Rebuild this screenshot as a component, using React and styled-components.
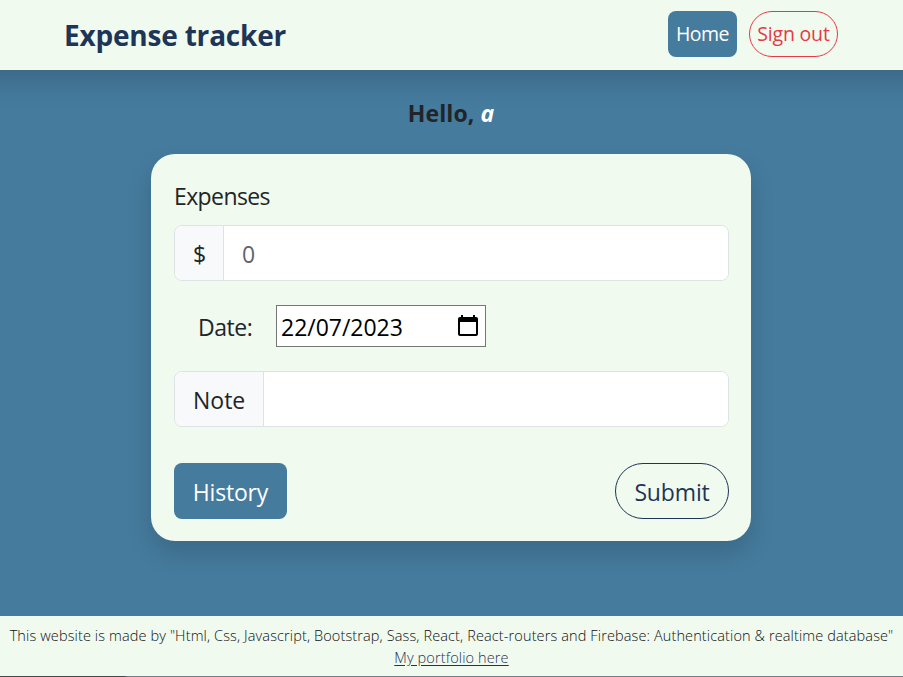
import React from "react";
import styled, { createGlobalStyle, css } from "styled-components";

const colors = {
  cream: "#f1faee",
  blue: "#457b9d",
  navy: "#1d3557",
  red: "#e63946",
  ink: "#212529",
  line: "#dee2e6",
};

const GlobalStyle = createGlobalStyle`
  *, *::before, *::after { box-sizing: border-box; }
  body {
    margin: 0;
    background: ${colors.blue};
    color: ${colors.ink};
    font-family: "Open Sans", "Noto Sans", sans-serif;
    font-size: 23px;
    font-weight: 370;
    line-height: 36px;
    overflow: hidden;
  }
  button, input { font: inherit; letter-spacing: inherit; }
`;

const Page = styled.div`
  display: flex;
  flex-direction: column;
  height: 677px;
`;

const Header = styled.header`
  display: flex;
  align-items: center;
  justify-content: space-between;
  flex: none;
  height: 70px;
  padding: 0 65px 2px 64px;
  background: ${colors.cream};
  box-shadow: 0 -12px 24px 24px rgba(0, 0, 0, 0.15);
`;

const Brand = styled.h1`
  margin: 2px 0 0;
  font-size: 28px;
  font-weight: 700;
  letter-spacing: -0.2px;
  white-space: nowrap;
  color: ${colors.navy};
`;

const Nav = styled.nav`
  display: flex;
  gap: 12px;
`;

const Button = styled.button`
  display: flex;
  align-items: center;
  justify-content: center;
  width: ${(p) => p.$width}px;
  height: ${(p) => (p.$small ? 46 : 56)}px;
  padding: ${(p) => (p.$small ? 0 : 2)}px 0 0;
  font-size: ${(p) => (p.$small ? 19.5 : 23)}px;
  letter-spacing: ${(p) => p.$spacing || 0}px;
  white-space: nowrap;
  ${(p) =>
    p.$outline
      ? css`
          border: 1px solid ${p.$outline};
          border-radius: 28px;
          background: transparent;
          color: ${p.$outline};
        `
      : css`
          border: 0;
          border-radius: 8px;
          background: ${colors.blue};
          color: white;
        `}
`;

const Main = styled.main`
  display: flex;
  flex: 1;
  flex-direction: column;
  align-items: center;
`;

const Greeting = styled.h2`
  margin: 25px 1px 23px 0;
  font-size: 23px;
  font-weight: 700;
  line-height: 36px;
  letter-spacing: 0.1px;

  em { color: white; }
`;

const Card = styled.form`
  display: flex;
  flex-direction: column;
  width: 600px;
  height: 387px;
  margin-right: 1px;
  padding: 24px 22px 22px 23px;
  border-radius: 24px;
  background: ${colors.cream};
  box-shadow: 0 12px 24px rgba(0, 0, 0, 0.15);
`;

const Label = styled.label`
  height: 36px;
  margin-bottom: 11px;
  letter-spacing: -0.6px;
`;

const InputGroup = styled.div`
  display: flex;
  flex: none;
  height: 56px;
  border: 1px solid ${colors.line};
  border-radius: 8px;
  background: white;
  overflow: hidden;
`;

const Addon = styled.span`
  display: flex;
  align-items: center;
  flex: none;
  width: ${(p) => p.$width}px;
  padding: 2px 0 0 18px;
  border-right: 1px solid ${colors.line};
  background: #f8f9fa;
`;

const Field = styled.input`
  flex: 1;
  min-width: 0;
  padding: 2px 18px 0;
  border: 0;
  outline: 0;
  background: white;

  &::placeholder { color: #5f656a; opacity: 1; }
`;

const DateRow = styled.div`
  display: flex;
  align-items: center;
  height: 42px;
  margin: 24px 0;
  padding-left: 24px;
`;

const DateLabel = styled.span`
  width: 78px;
  padding-top: 2px;
  letter-spacing: -0.45px;
`;

const DateBox = styled.div`
  display: flex;
  align-items: center;
  justify-content: space-between;
  width: 210px;
  height: 42px;
  padding: 2px 7px 0 4px;
  border: 1px solid #767676;
  background: white;
  color: black;
  letter-spacing: -0.02px;

  svg { margin-bottom: 3px; }
`;

const Actions = styled.div`
  display: flex;
  justify-content: space-between;
  margin-top: 36px;
`;

const Footer = styled.footer`
  flex: none;
  height: 61px;
  padding-top: 9px;
  background:
    linear-gradient(90deg, #42474c 0 124px, #737e87 128px) bottom / 100% 1px no-repeat,
    ${colors.cream};
  font-size: 14.5px;
  font-weight: 300;
  line-height: 22px;
  letter-spacing: 0.12px;
  text-align: center;
  white-space: nowrap;

  p { margin: 0; color: #0e1114; }
  a { color: ${colors.navy}; text-underline-offset: 2px; }
`;

const CalendarIcon = () => (
  <svg width="20" height="22" viewBox="0 0 20 22">
    <path
      fill="black"
      fillRule="evenodd"
      d="M3 0h2v2h10V0h2v2h1a2 2 0 0 1 2 2v15a2 2 0 0 1-2 2H2a2 2 0 0 1-2-2V4a2 2 0 0 1 2-2h1ZM2 7v12h16V7Z"
    />
  </svg>
);

export default function App() {
  return (
    <>
      <GlobalStyle />
      <Page>
        <Header>
          <Brand>Expense tracker</Brand>
          <Nav>
            <Button $small $width={69} $spacing={-0.5}>Home</Button>
            <Button $small $width={89} $outline={colors.red} $spacing={-0.2}>Sign out</Button>
          </Nav>
        </Header>
        <Main>
          <Greeting>Hello, <em>a</em></Greeting>
          <Card onSubmit={(e) => e.preventDefault()}>
            <Label htmlFor="amount">Expenses</Label>
            <InputGroup>
              <Addon $width={49}>$</Addon>
              <Field id="amount" placeholder="0" />
            </InputGroup>
            <DateRow>
              <DateLabel>Date:</DateLabel>
              <DateBox>
                <span>22/07/2023</span>
                <CalendarIcon />
              </DateBox>
            </DateRow>
            <InputGroup>
              <Addon $width={89}>Note</Addon>
              <Field aria-label="Note" />
            </InputGroup>
            <Actions>
              <Button type="button" $width={113} $spacing={-0.2}>History</Button>
              <Button $width={114} $outline={colors.navy} $spacing={-0.15}>Submit</Button>
            </Actions>
          </Card>
        </Main>
        <Footer>
          <p>This website is made by "Html, Css, Javascript, Bootstrap, Sass, React, React-routers and Firebase: Authentication &amp; realtime database"</p>
          <a href="#portfolio">My portfolio here</a>
        </Footer>
      </Page>
    </>
  );
}
